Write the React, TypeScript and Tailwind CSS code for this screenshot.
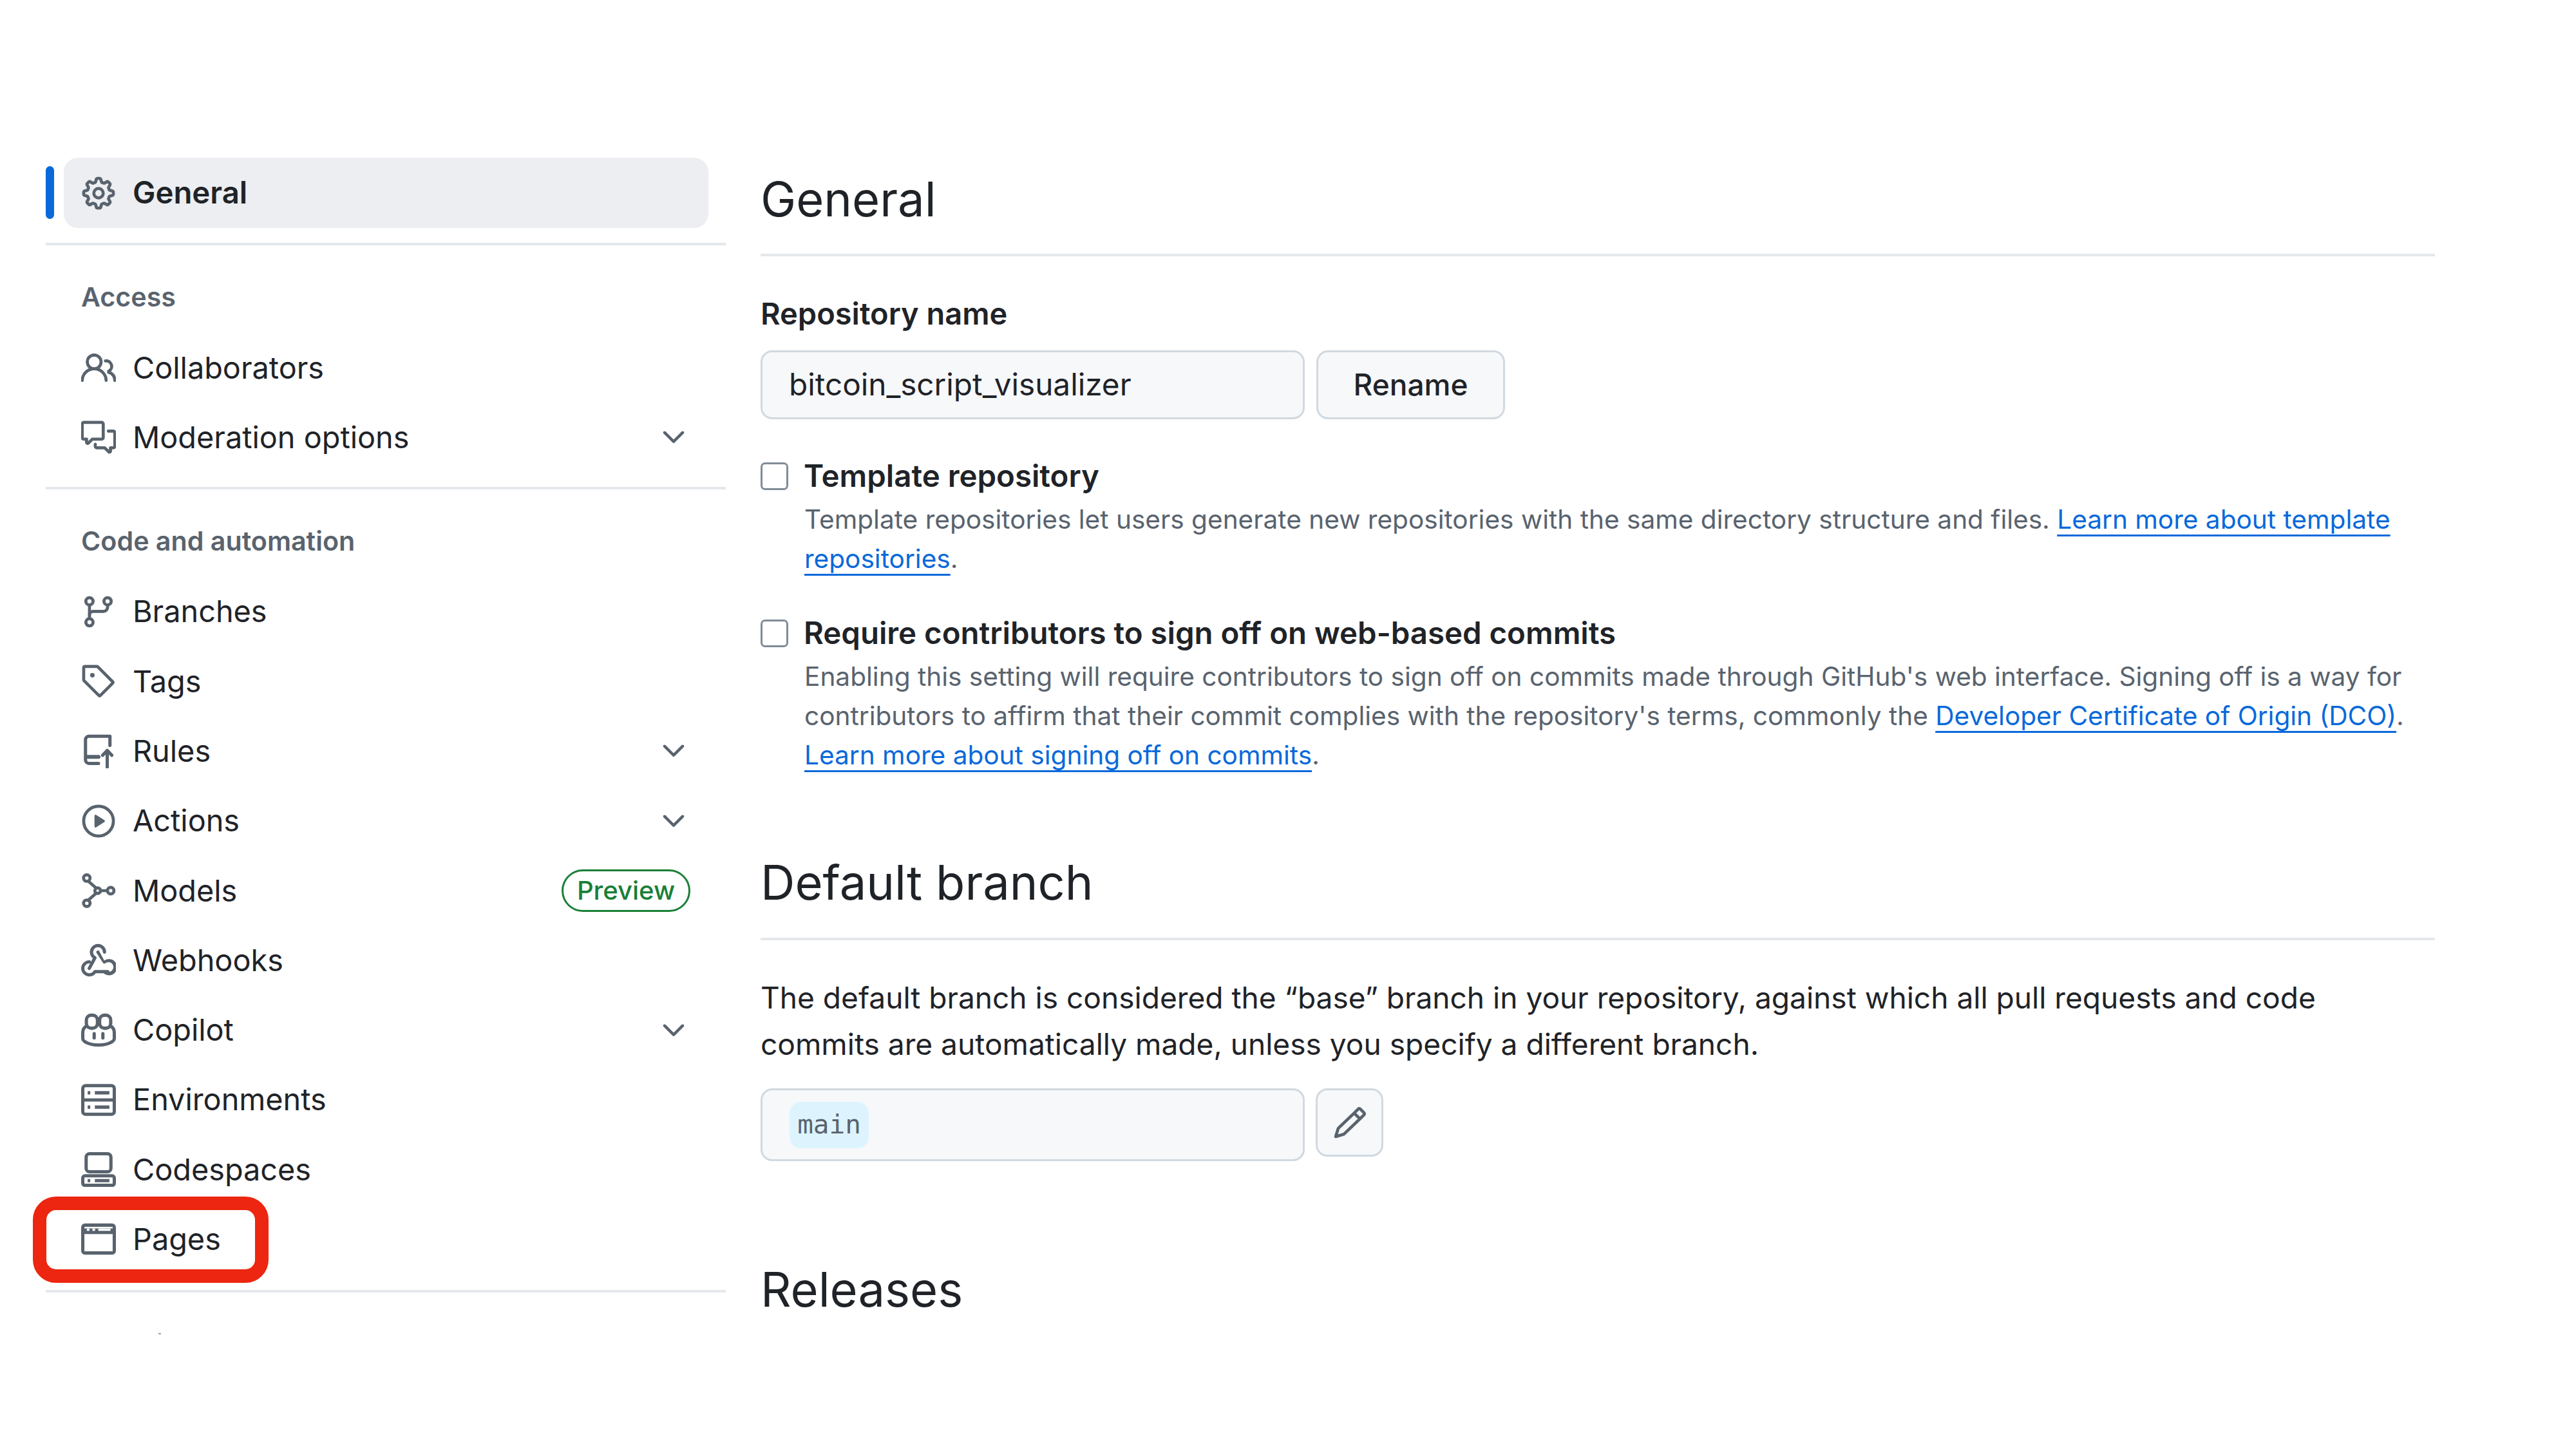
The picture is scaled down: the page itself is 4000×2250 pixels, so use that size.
import type { ReactNode } from 'react'
import {
  GoChevronDown,
  GoCommentDiscussion,
  GoGear,
  GoGitBranch,
  GoPencil,
  GoPeople,
  GoPlay,
  GoTag,
} from 'react-icons/go'

function ModelsIcon() {
  return (
    <svg viewBox="0 0 16 16" width={54} height={54} fill="none" stroke="currentColor" strokeWidth={1.4}>
      <circle cx="2.6" cy="2.2" r="1.5" />
      <circle cx="2.6" cy="13.8" r="1.5" />
      <circle cx="13.6" cy="8" r="1.5" />
      <circle cx="7.6" cy="8" r="1.3" />
      <path d="M3.3 3.6 6.9 6.8M3.3 12.4l3.6-3.2M9 8h3" />
    </svg>
  )
}

function WebhookIcon() {
  return (
    <svg viewBox="0 0 16 16" width={54} height={54} fill="currentColor">
      <path d="M5.5 4.25a2.25 2.25 0 0 1 4.5 0 .75.75 0 0 0 1.5 0 3.75 3.75 0 1 0-6.14 2.889l-2.272 4.258a.75.75 0 0 0 1.324.706L7 7.25a.75.75 0 0 0-.309-1.015A2.25 2.25 0 0 1 5.5 4.25Z" />
      <path d="M7.364 3.607a.75.75 0 0 1 1.012.314l2.25 4.215a3.75 3.75 0 1 1-.068 6.11.75.75 0 0 1 .97-1.144 2.25 2.25 0 1 0-.385-3.7.75.75 0 0 1-1.134-.206L7.05 4.62a.75.75 0 0 1 .314-1.013Z" />
      <path d="M3.75 9.5a2.25 2.25 0 1 0 1.945 3.38.75.75 0 0 1 .648-.38h5.907a.75.75 0 0 1 0 1.5H6.766A3.75 3.75 0 1 1 3.75 8a.75.75 0 0 1 0 1.5Z" />
    </svg>
  )
}

function RulesIcon() {
  return (
    <svg viewBox="0 0 16 16" width={54} height={54} fill="none" stroke="currentColor" strokeWidth={1.5} strokeLinecap="round" strokeLinejoin="round">
      <path d="M13.25 5.5V1.25H3.6A1.6 1.6 0 0 0 2 2.85v9.3a1.6 1.6 0 0 0 1.6 1.6H8" />
      <path d="M2.4 10.75H8" strokeWidth={1.8} />
      <path d="M12 15.5V7.8M9.9 10 12 7.8l2.1 2.2" />
    </svg>
  )
}

function CopilotIcon() {
  return (
    <svg viewBox="0 0 16 16" width={54} height={54} fill="none" stroke="currentColor" strokeWidth={1.5} strokeLinecap="round">
      <rect x="2.4" y="1" width="5.1" height="6" rx="2.2" />
      <rect x="8.5" y="1" width="5.1" height="6" rx="2.2" />
      <path d="M2.4 6C1 6.8.75 8 .75 9v2.8c0 1.2 2.7 2.95 7.25 2.95s7.25-1.75 7.25-2.95V9c0-1-.25-2.2-1.65-3" />
      <path d="M6 9.5v2M10 9.5v2" />
    </svg>
  )
}

function ServerIcon() {
  return (
    <svg viewBox="0 0 16 16" width={54} height={54} fill="none" stroke="currentColor" strokeWidth={1.5}>
      <rect x=".75" y="1.4" width="14.5" height="13.2" rx="1.3" />
      <path d="M.75 8h14.5" />
      <path d="M3 4.7h1.2M6.3 4.7h6.7M3 11.3h1.2M6.3 11.3h6.7" />
    </svg>
  )
}

function CodespacesIcon() {
  return (
    <svg viewBox="0 0 16 16" width={54} height={54} fill="none" stroke="currentColor" strokeWidth={1.5}>
      <rect x="2.3" y=".75" width="11.4" height="8.3" rx="1.6" />
      <rect x=".75" y="10.9" width="14.5" height="4.4" rx="1" />
      <path d="M3 13.1h1.2M6.3 13.1h6.7" />
    </svg>
  )
}

function BrowserIcon() {
  return (
    <svg viewBox="0 0 16 16" width={54} height={54} fill="none" stroke="currentColor" strokeWidth={1.5}>
      <rect x=".75" y="1.6" width="14.5" height="12.8" rx="1" />
      <path d="M.75 4.4h14.5" strokeWidth={2.6} />
      <path d="M2.6 3.7h1.2M5.2 3.7h1.2M7.9 3.7h5.6" stroke="#fff" strokeWidth={1} />
    </svg>
  )
}

function NavRow({ icon, label, chevron, badge }: { icon: ReactNode; label: string; chevron?: boolean; badge?: boolean }) {
  return (
    <div className="flex items-center h-[108.3px] pl-[55px] pr-[64px] text-[#1f2328]">
      <span className="w-[54px] h-[54px] flex items-center justify-center text-[#59636e] shrink-0">{icon}</span>
      <span className="ml-[26px] text-[46.8px] leading-none whitespace-nowrap">{label}</span>
      {chevron && <GoChevronDown size={54} strokeWidth={0.5} className="ml-auto -mr-[10px] text-[#59636e]" />}
      {badge && (
        <span className="ml-auto -mr-[9px] h-[66px] w-[200px] rounded-full border-[3px] border-[#1a7f37] text-[#1a7f37] text-[40px] font-medium flex items-center justify-center">
          Preview
        </span>
      )}
    </div>
  )
}

function Divider() {
  return <div className="h-[4px] bg-[#e4e7eb]" />
}

function SectionTitle({ children }: { children: ReactNode }) {
  return (
    <div className="mt-[51px] mb-[25px] h-[60px] pl-[55px] flex items-center text-[41.2px] font-semibold text-[#59636e] whitespace-nowrap">
      {children}
    </div>
  )
}

function Heading({ children, className }: { children: ReactNode; className: string }) {
  return <h2 className={`h-[100px] flex items-center text-[74px] leading-none text-[#1f2328] ${className}`}>{children}</h2>
}

function CheckLabel({ children, className }: { children: ReactNode; className: string }) {
  return (
    <div className={`flex items-center h-[60px] ${className}`}>
      <span className="w-[43px] h-[43px] rounded-[7px] border-[3px] border-[#818b98] bg-white shrink-0" />
      <span className="ml-[24px] text-[47.4px] font-semibold text-[#1f2328] whitespace-nowrap">{children}</span>
    </div>
  )
}

function DescLine({ children }: { children: ReactNode }) {
  return <div className="h-[61px] flex items-center pl-[68px] text-[40.6px] text-[#59636e] whitespace-pre">{children}</div>
}

function DocLink({ children }: { children: ReactNode }) {
  return <a className="text-[#0969da] underline decoration-[3px] underline-offset-[9px]">{children}</a>
}

const ICON = { size: 54, strokeWidth: 0.6 }

export default function App() {
  return (
    <div className="flex w-[4000px] h-[2250px] overflow-hidden bg-white [font-family:Inter,sans-serif]">

      {/* Sidebar */}
      <nav className="ml-[71px] w-[1056px] pt-[245px] shrink-0">
        <div className="relative ml-[28px] mr-[27px] h-[109px] bg-[#eceef1] rounded-[22px] flex items-center pl-[27px] text-[#1f2328]">
          <span className="absolute -left-[28px] top-[13px] w-[13px] h-[82px] rounded-full bg-[#0969da]" />
          <GoGear {...ICON} className="text-[#59636e]" />
          <span className="ml-[26px] text-[47.3px] font-semibold">General</span>
        </div>
        <div className="mt-[23px]"><Divider /></div>

        <SectionTitle>Access</SectionTitle>
        <NavRow icon={<GoPeople {...ICON} />} label="Collaborators" />
        <NavRow icon={<GoCommentDiscussion {...ICON} />} label="Moderation options" chevron />
        <div className="mt-[22px]"><Divider /></div>

        <SectionTitle>Code and automation</SectionTitle>
        <NavRow icon={<GoGitBranch {...ICON} />} label="Branches" />
        <NavRow icon={<GoTag {...ICON} />} label="Tags" />
        <NavRow icon={<RulesIcon />} label="Rules" chevron />
        <NavRow icon={<GoPlay {...ICON} />} label="Actions" chevron />
        <NavRow icon={<ModelsIcon />} label="Models" badge />
        <NavRow icon={<WebhookIcon />} label="Webhooks" />
        <NavRow icon={<CopilotIcon />} label="Copilot" chevron />
        <NavRow icon={<ServerIcon />} label="Environments" />
        <NavRow icon={<CodespacesIcon />} label="Codespaces" />
        <div className="relative">
          <NavRow icon={<BrowserIcon />} label="Pages" />
          {/* red annotation round the Pages item */}
          <div className="absolute -left-[20px] -top-[12px] w-[366px] h-[134px] rounded-[36px] border-[21px] border-[#ec2610]" />
        </div>
        <div className="mt-[24px]"><Divider /></div>
        <div className="mt-[63px] ml-[175px] w-[4px] h-[2px] bg-[#9aa0a6]" />
      </nav>

      {/* Main column */}
      <main className="ml-[54px] w-[2600px] pt-[259px] shrink-0">
        <Heading className="">General</Heading>
        <div className="mt-[35px]"><Divider /></div>

        <div className="mt-[59px] h-[60px] flex items-center text-[47px] font-semibold text-[#1f2328]">Repository name</div>
        <div className="mt-[27px] flex gap-[18px]">
          <div className="w-[845px] h-[107px] rounded-[18px] border-[3px] border-[#d1d9e0] bg-[#f6f8fa] flex items-center pl-[41px] text-[47.7px] text-[#1f2328]">
            bitcoin_script_visualizer
          </div>
          <div className="w-[293px] h-[107px] rounded-[18px] border-[3px] border-[#d1d9e0] bg-[#f6f8fa] flex items-center justify-center text-[46px] font-medium text-[#1f2328]">
            Rename
          </div>
        </div>

        <CheckLabel className="mt-[58px]">Template repository</CheckLabel>
        <div className="mt-[8px]">
          <DescLine>Template repositories let users generate new repositories with the same directory structure and files. <DocLink>Learn more about template</DocLink></DescLine>
          <DescLine><DocLink>repositories</DocLink>.</DescLine>
        </div>

        <CheckLabel className="mt-[54px]">Require contributors to sign off on web-based commits</CheckLabel>
        <div className="mt-[8px]">
          <DescLine>Enabling this setting will require contributors to sign off on commits made through GitHub's web interface. Signing off is a way for</DescLine>
          <DescLine>contributors to affirm that their commit complies with the repository's terms, commonly the <DocLink>Developer Certificate of Origin (DCO)</DocLink>.</DescLine>
          <DescLine><DocLink>Learn more about signing off on commits</DocLink>.</DescLine>
        </div>

        <Heading className="mt-[116px]">Default branch</Heading>
        <div className="mt-[36px]"><Divider /></div>

        <div className="mt-[53px] text-[46.1px] leading-[72px] text-[#1f2328] whitespace-nowrap">
          <div>The default branch is considered the “base” branch in your repository, against which all pull requests and code</div>
          <div>commits are automatically made, unless you specify a different branch.</div>
        </div>

        <div className="mt-[33px] flex items-start gap-[17px]">
          <div className="w-[845px] h-[113px] rounded-[18px] border-[3px] border-[#d1d9e0] bg-[#f6f8fa] flex items-center pl-[42px]">
            <span className="w-[123px] h-[72px] rounded-[18px] bg-[#ddf4ff] flex items-center justify-center text-[41px] text-[#59636e] [font-family:'DejaVu_Sans_Mono',monospace]">
              main
            </span>
          </div>
          <div className="w-[105px] h-[106px] rounded-[18px] border-[3px] border-[#d1d9e0] bg-[#f6f8fa] flex items-center justify-center text-[#59636e]">
            <GoPencil {...ICON} />
          </div>
        </div>

        <Heading className="mt-[149px]">Releases</Heading>
      </main>
    </div>
  )
}
